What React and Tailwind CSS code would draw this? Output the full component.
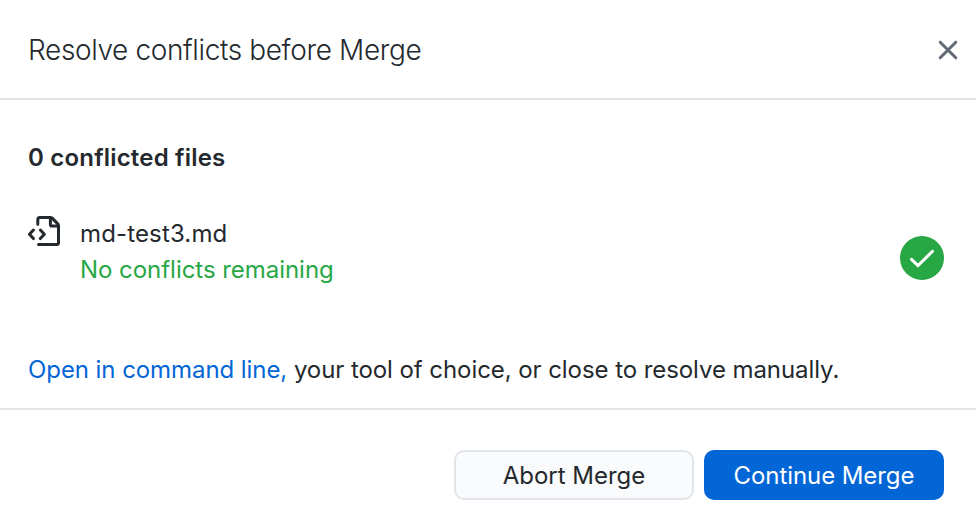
export default function App() {
  return (
    <div className="flex h-[530px] w-[976px] flex-col overflow-hidden whitespace-nowrap bg-white font-['Inter',sans-serif] text-[24px] leading-9 text-[#24292e]">
      <header className="flex h-[100px] items-center justify-between border-b-2 border-[#e1e4e8] pt-[2px] pr-[18px] pl-7">
        <h1 className="text-[28px] font-[350] tracking-[-0.37px]">Resolve conflicts before Merge</h1>
        <button aria-label="Close">
          <svg width="20" height="20" viewBox="0 0 20 20" fill="none" stroke="#626b75" strokeWidth="3" strokeLinecap="round">
            <path d="M2.2 2.2L17.8 17.8M17.8 2.2L2.2 17.8" />
          </svg>
        </button>
      </header>
      <main className="flex h-[310px] flex-col border-b-2 border-[#e1e4e8] pr-8 pl-7 pt-10">
        <h2 className="font-semibold tracking-[0.2px]">0 conflicted files</h2>
        <div className="mt-10 flex h-[72px]">
          <svg className="w-[52px] shrink-0" width="52" height="32" viewBox="0 0 52 32" fill="none" stroke="#24292e" strokeWidth="3" strokeLinecap="round" strokeLinejoin="round">
            <path d="M9.8 8.3V3.5Q9.8 1.5 11.9 1.5H22.5Q23.5 1.5 24.2 2.1L30 8.1Q30.5 8.8 30.5 9.8V26.5Q30.5 28.5 28.5 28.5H10.5" />
            <path d="M22.4 2V8.4Q22.4 10 24 10H30" />
            <path d="M5.4 14L1.5 18.3L5.4 22.6M12.4 14L16.3 18.3L12.4 22.6" />
          </svg>
          <div className="flex-1">
            <p className="tracking-[0.15px]">md-test3.md</p>
            <p className="tracking-[-0.04px] text-[#28a745]">No conflicts remaining</p>
          </div>
          <div className="mt-5 flex size-11 items-center justify-center rounded-full bg-[#28a745]">
            <svg width="24" height="20" viewBox="0 0 24 20" fill="none" stroke="white" strokeWidth="3" strokeLinecap="round">
              <path d="M1.5 11.3L8 17.6L22.5 3.3" />
            </svg>
          </div>
        </div>
        <p className="mt-16 tracking-[-0.07px]"><a className="text-[#0366d6]">Open in command line,</a> your tool of choice, or close to resolve manually.</p>
      </main>
      <footer className="flex justify-end gap-[10px] pt-10 pr-8">
        <button className="h-[50px] w-60 rounded-[10px] border-2 border-[#e1e4e8] bg-[#fafbfc] pt-[2px]">Abort Merge</button>
        <button className="h-[50px] w-60 rounded-[10px] bg-[#0366d6] pt-[2px] tracking-[-0.08px] text-white">Continue Merge</button>
      </footer>
    </div>
  );
}
